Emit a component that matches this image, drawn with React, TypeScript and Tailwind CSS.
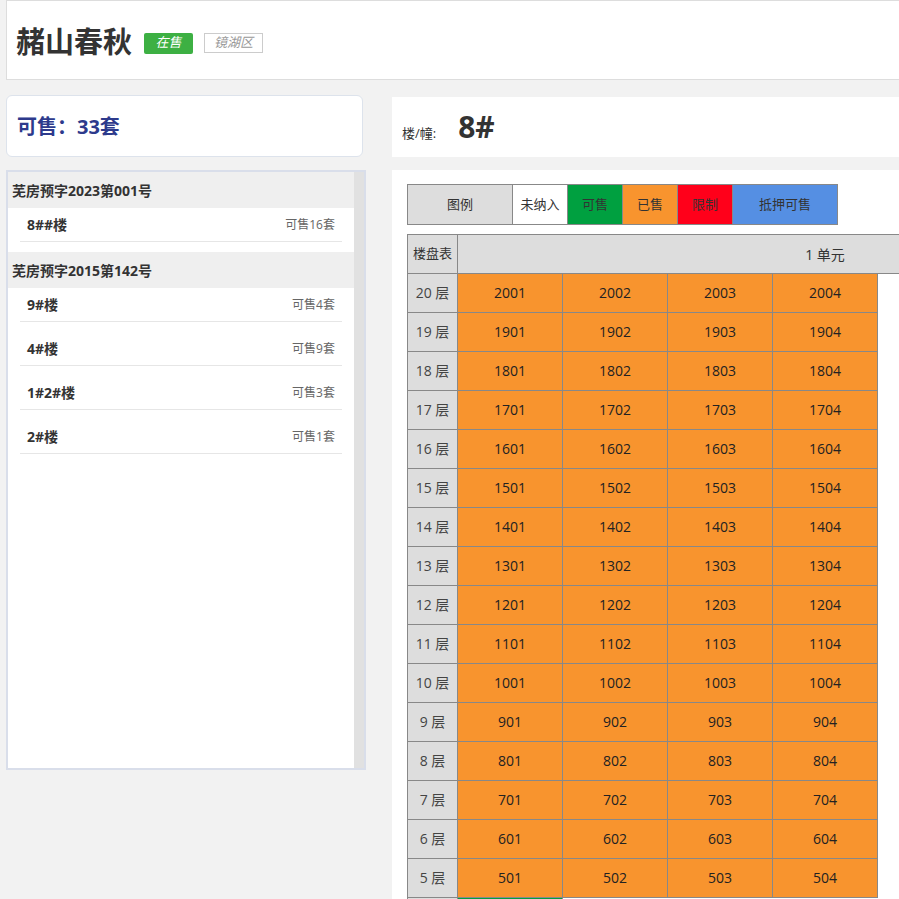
const font = { fontFamily: '"Open Sans", "Noto Sans CJK SC", sans-serif' };

const groups = [
  { name: "芜房预字2023第001号", items: [{ b: "8##楼", n: 16 }] },
  {
    name: "芜房预字2015第142号",
    items: [
      { b: "9#楼", n: 4 },
      { b: "4#楼", n: 9 },
      { b: "1#2#楼", n: 3 },
      { b: "2#楼", n: 1 },
    ],
  },
];

const legend = [
  { label: "图例", cls: "w-[105px] bg-[#dddddd]" },
  { label: "未纳入", cls: "w-[55px] bg-white" },
  { label: "可售", cls: "w-[55px] bg-[#00a040]" },
  { label: "已售", cls: "w-[55px] bg-[#f8942e]" },
  { label: "限制", cls: "w-[55px] bg-[#ff001a]" },
  { label: "抵押可售", cls: "w-[105px] bg-[#558fe3]" },
];

// only the floors that fit on screen
const floors = Array.from({ length: 16 }, (_, i) => 20 - i);

export default function App() {
  return (
    <div className="w-[899px] h-[899px] overflow-hidden bg-[#f2f2f2] text-[#333]" style={font}>
      {/* HEADER */}
      <div className="ml-[6px] w-[1000px] h-[80px] bg-white border border-[#dddddd] flex items-center pl-[9px]">
        <h1 className="text-[29px] font-bold text-[#333] leading-none" style={{ fontFamily: '"Noto Sans CJK SC", sans-serif' }}>
          赭山春秋
        </h1>
        <span className="ml-[12px] mt-[6px] w-[49px] h-[21px] rounded-[2px] bg-[#3db043] text-white text-[13px] italic flex items-center justify-center">
          在售
        </span>
        <span className="ml-[11px] mt-[6px] w-[59px] h-[20px] border border-[#cccccc] text-[#999] text-[13px] italic flex items-center justify-center">
          镜湖区
        </span>
      </div>

      <div className="flex pl-[6px] mt-[15px] gap-[26px]">
        {/* LEFT */}
        <div className="w-[360px] shrink-0">
          <div className="w-[357px] h-[62px] bg-white border border-[#dde3ec] rounded-[6px] flex items-center pl-[10px] pt-[2px]">
            <span className="text-[20px] font-bold text-[#2d3a8c]">可售：33套</span>
          </div>
          <div className="mt-[13px] h-[600px] border-2 border-[#d9deea] flex">
            <div className="flex-1 bg-white">
              {groups.map(g => (
                <div key={g.name}>
                  <div className="h-[36px] bg-[#efefef] flex items-center pl-[4px] text-[14px] font-bold text-[#333]">
                    {g.name}
                  </div>
                  <ul className="flex flex-col gap-[10px] pb-[10px]">
                    {g.items.map(it => (
                      <li
                        key={it.b}
                        className="mx-[12px] h-[34px] border-b border-[#e6e6e6] flex items-center justify-between px-[7px]"
                      >
                        <span className="text-[14px] font-bold text-[#333]">{it.b}</span>
                        <span className="text-[12px] text-[#666]">可售{it.n}套</span>
                      </li>
                    ))}
                  </ul>
                </div>
              ))}
            </div>
            <div className="w-[10px] bg-[#e1e1e1]" />
          </div>
        </div>

        {/* RIGHT */}
        <div className="flex-1 min-w-0">
          <div className="mt-[2px] h-[60px] bg-white flex items-end pb-[13px] pl-[10px]">
            <span className="text-[13px] text-[#333] mb-[1px]">楼/幢:</span>
            <span className="ml-[22px] text-[30px] font-bold text-[#333] leading-none mb-[2px]">8#</span>
          </div>

          <div className="mt-[13px] h-[800px] bg-white pl-[15px] pt-[14px]">
            {/* legend */}
            <div className="flex border-y border-l border-[#888] w-max">
              {legend.map(l => (
                <div
                  key={l.label}
                  className={`${l.cls} h-[39px] border-r border-[#888] flex items-center justify-center text-[13px] text-[#333]`}
                >
                  {l.label}
                </div>
              ))}
            </div>

            {/* building table */}
            <div className="mt-[9px] w-[1000px]">
              <div className="flex border-t border-b border-[#888] h-[40px]">
                <div className="w-[51px] border-x border-[#888] bg-[#dddddd] flex items-center justify-center text-[13px] text-[#333]">
                  楼盘表
                </div>
                <div className="w-[735px] border-r border-[#888] bg-[#dddddd] flex items-center justify-center text-[14px] text-[#333]">
                  1 单元
                </div>
              </div>
              {floors.map(f => (
                <div key={f} className="flex h-[39px]">
                  <div className="w-[51px] border-x border-b border-[#888] bg-[#dddddd] flex items-center justify-center pb-[1px] text-[14px] text-[#444]">
                    {f} 层
                  </div>
                  {[1, 2, 3, 4].map(u => (
                    <div
                      key={u}
                      className="w-[105px] border-r border-b border-[#888] bg-[#f8942e] flex items-center justify-center pb-[2px] text-[14px] text-[#222]"
                    >
                      {f * 100 + u}
                    </div>
                  ))}
                </div>
              ))}
              {/* top edge of the next (available) row */}
              <div className="flex h-[4px]">
                <div className="w-[51px] border-x border-[#888] bg-[#dddddd]" />
                <div className="w-[105px] border-r border-[#888] bg-[#00a040]" />
              </div>
            </div>
          </div>
        </div>
      </div>
    </div>
  );
}
